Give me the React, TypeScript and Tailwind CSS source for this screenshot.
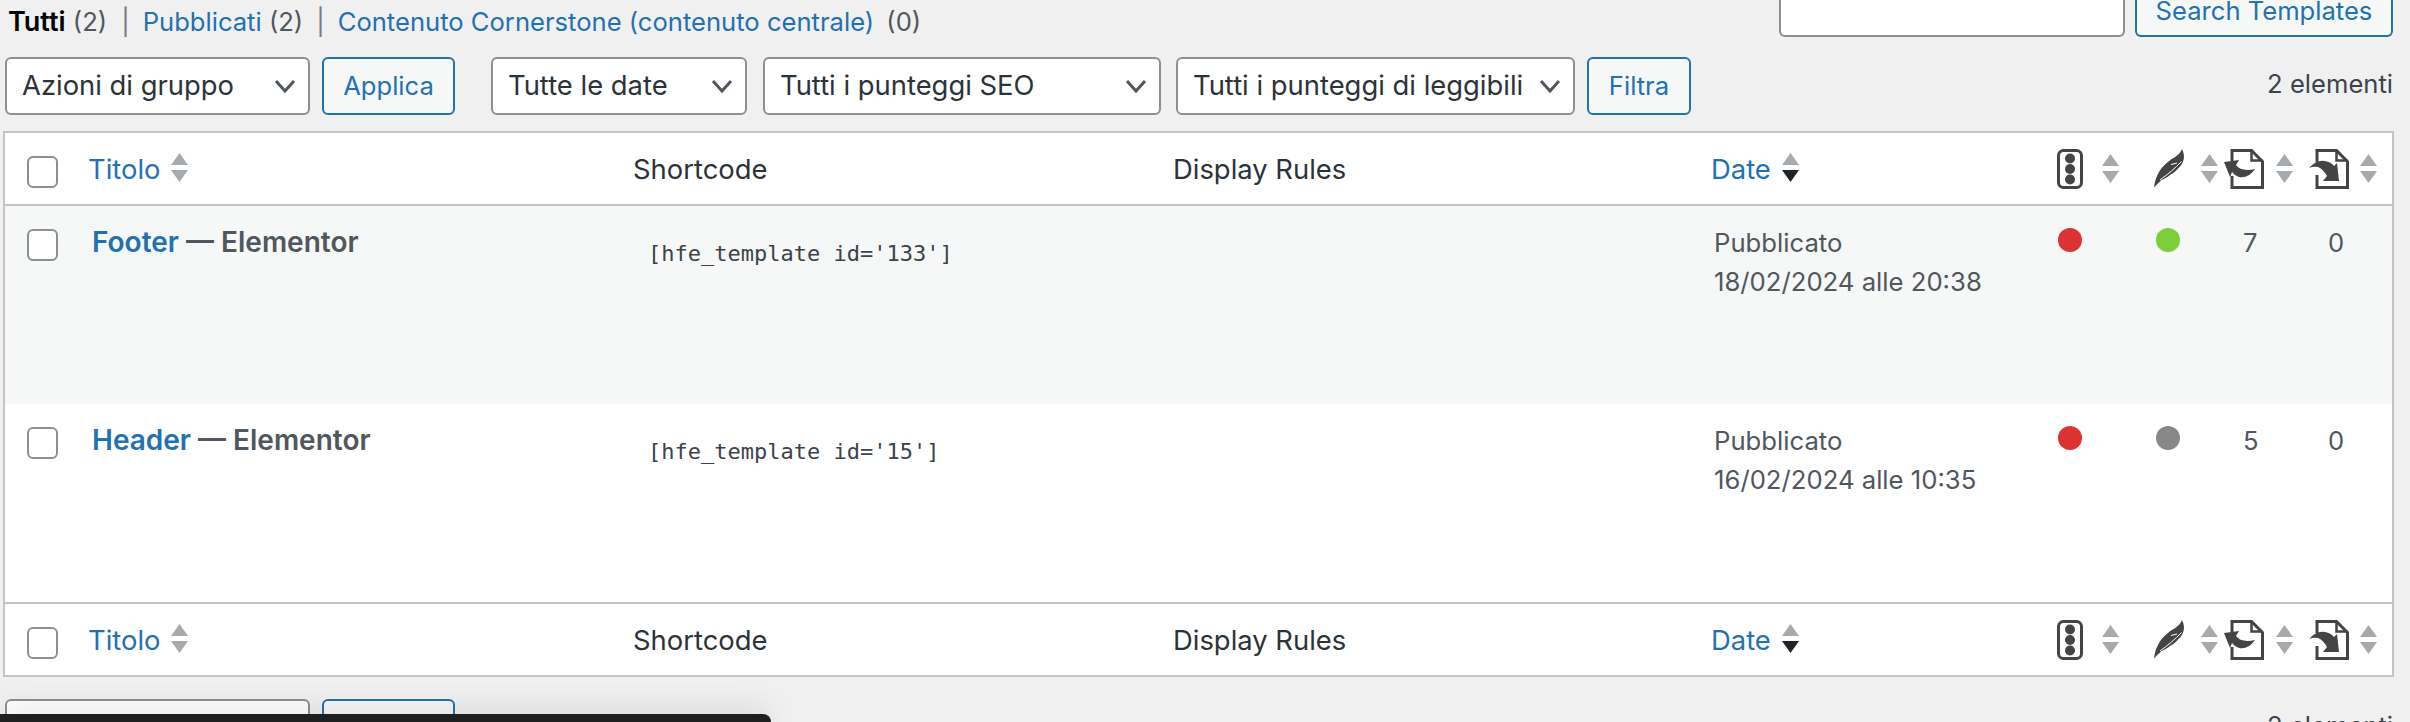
const rowGrid = 'grid grid-cols-[83px_545px_540px_538px_346px_96px_71px_85px_82px]';

function SortArrows({ active = false }: { active?: boolean }) {
  return (
    <svg width="17" height="30" viewBox="0 0 17 30" className="shrink-0">
      <path d="M8.5 0L17 12H0Z" fill="#a7aaad" />
      <path d="M8.5 29L17 17H0Z" fill={active ? '#1d2327' : '#a7aaad'} />
    </svg>
  );
}

function Chevron() {
  return (
    <svg width="22" height="14" viewBox="0 0 22 14" fill="none" stroke="#50575e" strokeWidth={3} className="shrink-0">
      <path d="M2 2l9 10 9-10" />
    </svg>
  );
}

function Select({ label, className }: { label: string; className: string }) {
  return (
    <div className={`h-[58px] flex items-center justify-between pl-[15px] pr-[12px] bg-white border-2 border-[#8c8f94] rounded-[6px] text-[27.4px] text-[#2c3338] whitespace-nowrap ${className}`}>
      <span>{label}</span>
      <Chevron />
    </div>
  );
}

function Button({ label, className }: { label: string; className: string }) {
  return (
    <div className={`h-[58px] flex items-center justify-center bg-[#f6f7f7] border-2 border-[#2271b1] rounded-[6px] text-[#2271b1] ${className}`}>
      {label}
    </div>
  );
}

function Checkbox() {
  return <div className="w-[31px] h-[32px] bg-white border-2 border-[#8c8f94] rounded-[6px]" />;
}

function TrafficIcon() {
  return (
    <svg width="26" height="40" viewBox="0 0 26 40" className="shrink-0">
      <rect x="1.5" y="1.5" width="23" height="37" rx="5" fill="#fff" stroke="#444" strokeWidth="3" />
      <circle cx="13" cy="9.5" r="5" fill="#444" />
      <circle cx="13" cy="20" r="5" fill="#444" />
      <circle cx="13" cy="30.5" r="5" fill="#444" />
    </svg>
  );
}

function FeatherIcon() {
  return (
    <svg width="32" height="40" viewBox="0 0 32 40" className="shrink-0">
      <path
        d="M29 0C31 4 31.500 8 30.500 11C29.500 15 27.500 17 25.500 19C22 23 19 25 17 26C14 28.500 11 30 8.500 31C6 33.500 3 36 1 38.500C1.500 34 2.500 30 4 27C6 22.500 8 19.500 10.500 17C14 13.500 17 11 20.500 9C23 7.500 27 5 29 0Z"
        fill="#444"
      />
      <path d="M7 31C11 28 15 25 18.500 22C22 19 25.500 15.500 28.500 12.500M18 15.500L24 14" fill="none" stroke="#fff" strokeWidth="1" />
    </svg>
  );
}

function LinkInIcon() {
  return (
    <svg width="41" height="40" viewBox="0 0 41 40" className="shrink-0">
      <path d="M8 12V1.500H27.500L38.500 12.500V38.500H8V27" fill="#fff" stroke="#444" strokeWidth="3" />
      <path d="M27.500 1.500V11.500H38.500" fill="none" stroke="#444" strokeWidth="2.500" />
      <path d="M0 13L15 11L12 16Q17 23 31 20Q24 30 15 28Q11 27 8 23L6 28Z" fill="#444" />
    </svg>
  );
}

function LinkOutIcon() {
  return (
    <svg width="40" height="40" viewBox="0 0 40 40" className="shrink-0">
      <path d="M8 13V1.500H27.500L38.500 12.500V38.500H8V26" fill="#fff" stroke="#444" strokeWidth="3" />
      <path d="M27.500 1.500V11.500H38.500" fill="none" stroke="#444" strokeWidth="2.500" />
      <path d="M0 19Q8 10 16 12Q22 13 25 17L28 14L30 32L14 32L18 27Q14 20 9 18Q4 17 0 19Z" fill="#444" />
    </svg>
  );
}

function TableHead({ border }: { border: string }) {
  return (
    <div className={`${rowGrid} h-[73px] items-center bg-white text-[27.4px] ${border} border-[#c3c4c7]`}>
      <div className="pl-[22px] pt-[6px] flex"><Checkbox /></div>
      <div className="flex items-center gap-[10px] text-[#2271b1]"><span className="pt-[3px]">Titolo</span> <SortArrows /></div>
      <div className="pt-[3px]">Shortcode</div>
      <div className="pt-[3px]">Display Rules</div>
      <div className="flex items-center gap-[11px] text-[#2271b1]"><span className="pt-[3px]">Date</span> <SortArrows active /></div>
      <div className="flex items-center gap-[19px]"><TrafficIcon /><SortArrows /></div>
      <div className="flex items-center gap-[16px]"><FeatherIcon /><SortArrows /></div>
      <div className="flex items-center gap-[11px]"><LinkInIcon /><SortArrows /></div>
      <div className="flex items-center gap-[11px]"><LinkOutIcon /><SortArrows /></div>
    </div>
  );
}

function Row({ title, id, date, read, inbound, stripe }: { title: string; id: string; date: string; read: string; inbound: string; stripe: string }) {
  return (
    <div className={`${rowGrid} h-[198px] items-start pt-[20px] text-[#50575e] ${stripe}`}>
      <div className="pl-[22px] flex pt-[3px]"><Checkbox /></div>
      <div className="pl-[4px] font-semibold text-[28px] leading-[36px] -mt-[2px]">
        <span className="text-[#2271b1]">{title}</span> — Elementor
      </div>
      <div className="pl-[15px] pt-[13px] font-['DejaVu_Sans_Mono',monospace] text-[22px] leading-[30px] text-[#3c434a]">[hfe_template id='{id}']</div>
      <div />
      <div className="pl-[3px] text-[25.7px] leading-[39px] -mt-[3px]">Pubblicato<br />{date}</div>
      <div className="pl-px pt-[2px]"><div className="w-[24px] h-[24px] rounded-full bg-[#dc3232]" /></div>
      <div className="pl-[3px] pt-[2px]"><div className={`w-[24px] h-[24px] rounded-full ${read}`} /></div>
      <div className="pl-[19px] leading-[39px] -mt-[3px]">{inbound}</div>
      <div className="pl-[19px] leading-[39px] -mt-[3px]">0</div>
    </div>
  );
}

export default function App() {
  return (
    <div className="w-[2410px] h-[722px] overflow-hidden relative bg-[#f0f0f1] font-['Inter',sans-serif] text-[25.6px] text-[#2c3338]">
      <div className="h-[57px] pl-[8px] pr-[17px] flex justify-between items-start">
        <div className="pt-[7px] leading-[30px] text-[#50575e] whitespace-nowrap">
          <span className="font-semibold text-[27px] text-black">Tutti</span> (2)<span className="ml-[14px] mr-[13px] text-[#787c82]">|</span>
          <span className="text-[#2271b1]">Pubblicati</span> (2)<span className="mx-[13px] text-[#787c82]">|</span>
          <span className="text-[#2271b1]">Contenuto Cornerstone (contenuto centrale)</span><span className="ml-[5px]"> (0)</span>
        </div>
        <div className="flex gap-[10px]">
          <div className="w-[346px] h-[37px] bg-white border-2 border-t-0 border-[#8c8f94] rounded-b-[6px]" />
          <div className="w-[258px] h-[37px] flex items-end justify-center pb-[11px] leading-[26px] bg-[#f6f7f7] border-2 border-t-0 border-[#2271b1] rounded-b-[6px] text-[#2271b1]">
            Search Templates
          </div>
        </div>
      </div>

      <div className="h-[74px] pl-[5px] pr-[17px] flex items-start">
        <Select label="Azioni di gruppo" className="w-[305px]" />
        <Button label="Applica" className="w-[133px] ml-[12px]" />
        <Select label="Tutte le date" className="w-[256px] ml-[36px]" />
        <Select label="Tutti i punteggi SEO" className="w-[398px] ml-[16px]" />
        <Select label="Tutti i punteggi di leggibili" className="w-[399px] ml-[15px]" />
        <Button label="Filtra" className="w-[104px] ml-[12px]" />
        <div className="ml-auto pt-[12px] leading-[30px] text-[#3c434a]">2 elementi</div>
      </div>

      <div className="mx-[3px] w-[2391px] border-2 border-[#c3c4c7]">
        <TableHead border="border-b-2" />
        <Row title="Footer" id="133" date="18/02/2024 alle 20:38" read="bg-[#7ad03a]" inbound="7" stripe="bg-[#f6f7f7]" />
        <Row title="Header" id="15" date="16/02/2024 alle 10:35" read="bg-[#888888]" inbound="5" stripe="bg-white" />
        <TableHead border="border-t-2" />
      </div>

      <div className="mt-[22px] pl-[5px] pr-[17px] flex items-start">
        <div className="w-[305px] h-[58px] bg-white border-2 border-[#8c8f94] rounded-[6px]" />
        <div className="w-[133px] h-[58px] ml-[12px] bg-[#f6f7f7] border-2 border-[#2271b1] rounded-[6px]" />
        <div className="ml-auto pt-[12px] leading-[30px] text-[#3c434a]">2 elementi</div>
      </div>

      <div className="absolute left-0 bottom-0 w-[771px] h-[8px] bg-[#1e1e1e] rounded-tr-[8px] shadow-[0_0_30px_rgba(0,0,0,0.25)]" />
    </div>
  );
}
